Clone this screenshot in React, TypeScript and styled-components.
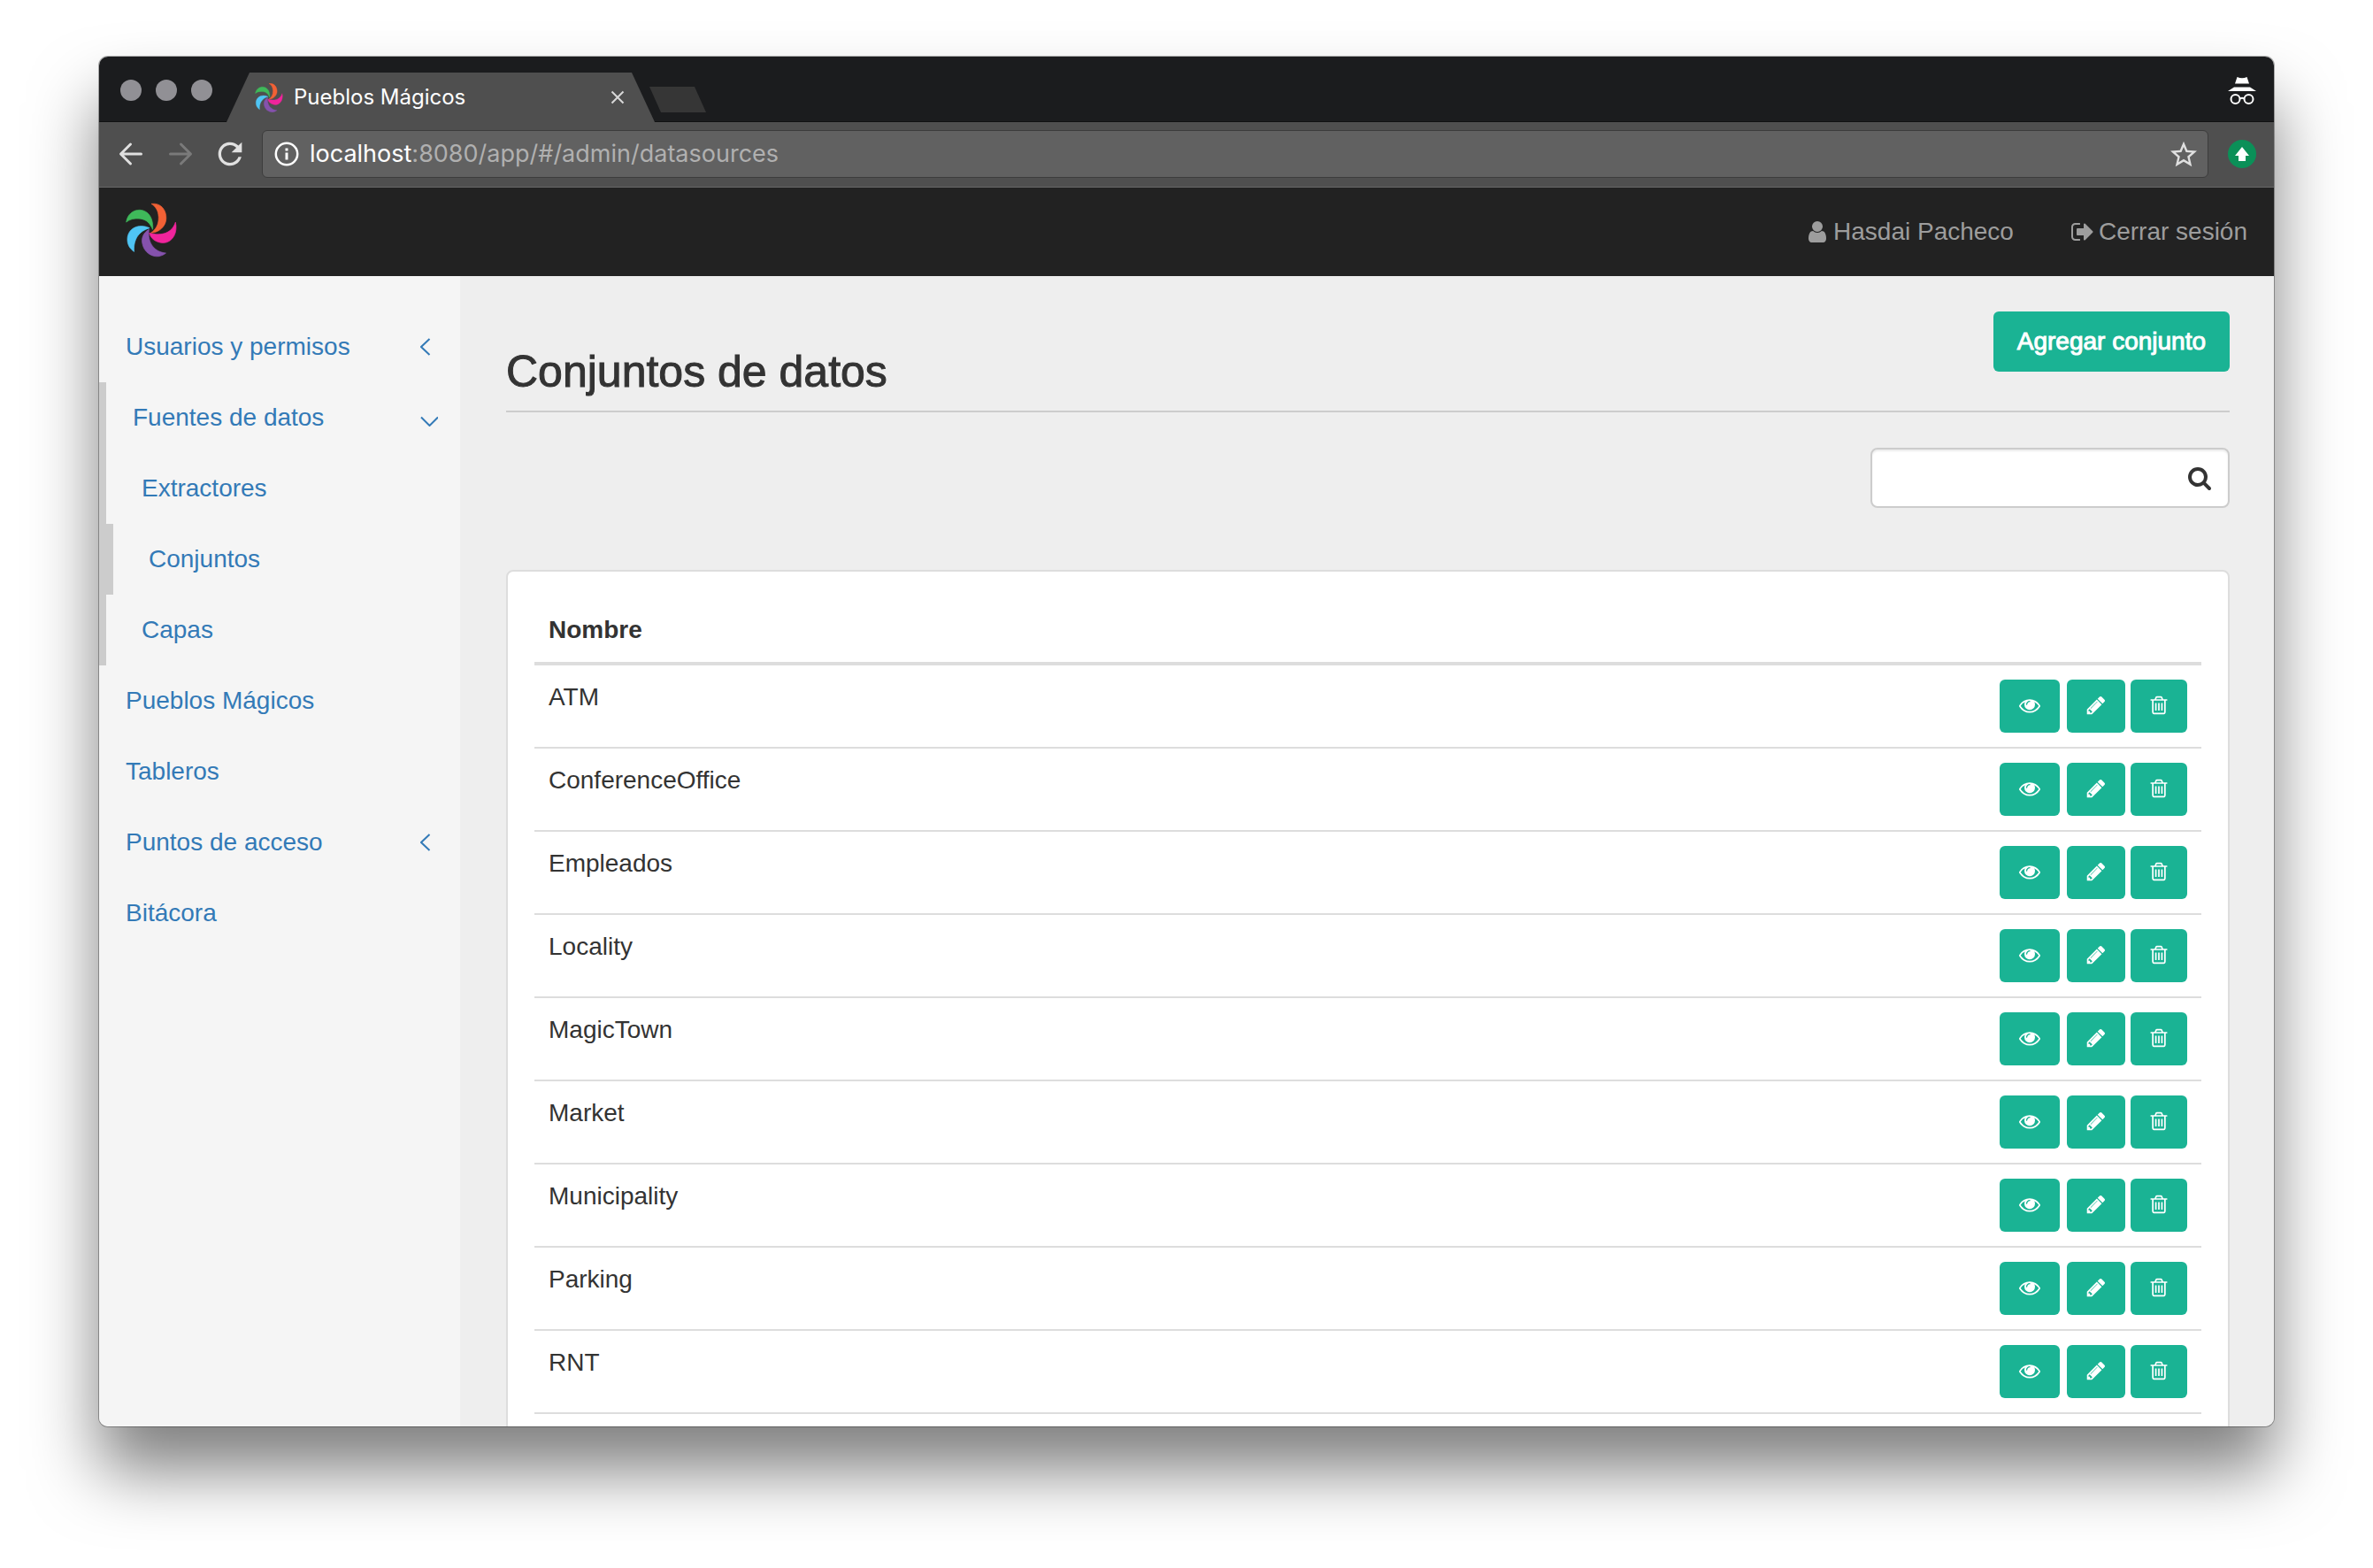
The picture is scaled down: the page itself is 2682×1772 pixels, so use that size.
import React from "react";
import styled, { createGlobalStyle } from "styled-components";

const GlobalStyle = createGlobalStyle`
  *, *::before, *::after { box-sizing: border-box; }
  body { margin: 0; background: #fff; }
  button, input { font: inherit; }
`;

const appFont = `"Liberation Sans", Arial, sans-serif`;
const chromeFont = `Inter, Roboto, sans-serif`;

/* ---------- browser window ---------- */

const Desktop = styled.div`
  display: flex;
  height: 100vh;
  padding: 64px 112px 160px;
  background: #fff;
`;

const BrowserWindow = styled.div`
  flex: 1;
  min-width: 0;
  display: flex;
  flex-direction: column;
  overflow: hidden;
  border-radius: 10px;
  background: #eee;
  box-shadow: 0 0 0 1px rgba(0, 0, 0, 0.3), 0 50px 76px rgba(0, 0, 0, 0.5);
`;

const TabStrip = styled.div`
  display: flex;
  align-items: flex-end;
  flex: none;
  height: 74px;
  padding: 2px 20px 0 24px;
  background: #1b1c1e;
  box-shadow: inset 0 -1px 0 #101112;
  font-family: ${chromeFont};
`;

const WindowButtons = styled.div`
  display: flex;
  gap: 16px;
  align-self: center;
  margin-right: 16px;
`;

const WindowButton = styled.button`
  width: 24px;
  height: 24px;
  padding: 0;
  border: 0;
  border-radius: 50%;
  background: #919095;
`;

const Tab = styled.div`
  display: flex;
  align-items: center;
  gap: 12px;
  width: 484px;
  height: 56px;
  padding: 0 34px 0 32px;
  background: #4f4f4f;
  clip-path: polygon(0 100%, 26px 0, calc(100% - 26px) 0, 100% 100%);
  color: #fff;
`;

const TabTitle = styled.span`
  flex: 1;
  font-size: 24px;
  line-height: 32px;
  white-space: nowrap;
`;

const PlainButton = styled.button`
  display: flex;
  flex: none;
  padding: 0;
  border: 0;
  background: none;
  color: inherit;
`;

const NewTab = styled.button`
  width: 64px;
  height: 29px;
  margin: 0 auto 11px -6px;
  padding: 0;
  border: 0;
  background: #363636;
  clip-path: polygon(0 0, 51px 0, 100% 100%, 13px 100%);
`;

const Incognito = styled.div`
  display: flex;
  align-self: center;
`;

const Toolbar = styled.div`
  display: flex;
  align-items: center;
  flex: none;
  gap: 22px;
  padding: 9px 20px 10px 22px;
  border-bottom: 1px solid #686868;
  background: #4f4f4f;
  font-family: ${chromeFont};
`;

const NavButtons = styled.div`
  display: flex;
  gap: 28px;
`;

const NavButton = styled(PlainButton)<{ $muted?: boolean }>`
  color: ${(p) => (p.$muted ? "#7a7a7a" : "#e0e0e0")};
`;

const AddressBar = styled.div`
  display: flex;
  align-items: center;
  flex: 1;
  min-width: 0;
  height: 54px;
  gap: 12px;
  padding: 0 12px 0 13px;
  border: 1px solid #3c3c3c;
  border-radius: 6px;
  background: #616161;
  color: #e0e0e0;
`;

const Url = styled.div`
  flex: 1;
  color: #b0b0b0;
  font-size: 27px;
  line-height: 36px;
  white-space: nowrap;
`;

const UrlHost = styled.span`
  color: #fff;
`;

/* ---------- application ---------- */

const AppHeader = styled.header`
  display: flex;
  align-items: center;
  justify-content: space-between;
  flex: none;
  height: 100px;
  padding: 0 30px;
  background: #222;
  font-family: ${appFont};
`;

const HomeLink = styled.a`
  display: flex;
  margin-bottom: 4px;
`;

const UserNav = styled.nav`
  display: flex;
  gap: 64px;
`;

const UserLink = styled.a`
  display: flex;
  align-items: center;
  gap: 4px;
  color: #9d9d9d;
  font-size: 28px;
  line-height: 40px;
  text-decoration: none;
`;

const AppBody = styled.div`
  display: flex;
  flex: 1;
  min-height: 0;
  font-family: ${appFont};
  font-size: 28px;
  line-height: 40px;
`;

const Sidebar = styled.nav`
  flex: none;
  width: 408px;
  padding-top: 40px;
  background: #f5f5f5;
`;

const MenuList = styled.ul`
  margin: 0;
  padding: 0;
  list-style: none;
`;

const MenuItem = styled.li<{ $active?: boolean }>`
  border-left: ${(p) => (p.$active ? "8px solid #ccc" : "0")};
`;

const MenuLink = styled.a<{ $nested?: boolean }>`
  display: flex;
  align-items: center;
  justify-content: space-between;
  padding: 20px 25px 20px ${(p) => (p.$nested ? "40px" : "30px")};
  color: #337ab7;
  text-decoration: none;
`;

const Content = styled.main`
  flex: 1;
  min-width: 0;
  padding: 40px 50px 40px 52px;
  background: #eee;
  color: #333;
`;

const PageHeader = styled.div`
  display: flex;
  align-items: flex-start;
  justify-content: space-between;
  padding-bottom: 16px;
  border-bottom: 2px solid #ccc;
`;

const PageTitle = styled.h1`
  margin: 40px 0 0;
  font-size: 50px;
  font-weight: 400;
  line-height: 56px;
  -webkit-text-stroke: 1px #333;
`;

const PrimaryButton = styled.button`
  height: 68px;
  padding: 0 27px;
  border: 0;
  border-radius: 6px;
  background: #1ab394;
  color: #fff;
  -webkit-text-stroke: 1px #fff;
`;

const SearchBox = styled.label`
  display: flex;
  align-items: center;
  width: 406px;
  height: 68px;
  margin: 40px 0 70px auto;
  padding: 0 18px 0 24px;
  border: 2px solid #ccc;
  border-radius: 8px;
  background: #fff;
  box-shadow: inset 0 2px 2px rgba(0, 0, 0, 0.075);
`;

const SearchInput = styled.input`
  flex: 1;
  min-width: 0;
  padding: 0;
  border: 0;
  outline: 0;
  background: none;
  color: #333;
`;

const Panel = styled.section`
  padding: 30px;
  border: 2px solid #ddd;
  border-radius: 8px;
  background: #fff;
`;

const DataTable = styled.table`
  width: 100%;
  border-collapse: separate;
  border-spacing: 0;
`;

const HeadCell = styled.th`
  padding: 16px;
  border-bottom: 4px solid #ddd;
  text-align: left;
`;

const Cell = styled.td`
  padding: 16px;
  border-bottom: 2px solid #ddd;
  vertical-align: top;
`;

const Actions = styled.div`
  display: flex;
  justify-content: flex-end;
  gap: 6px;
`;

const ActionButton = styled.button<{ $width: number }>`
  display: flex;
  align-items: center;
  justify-content: center;
  width: ${(p) => p.$width}px;
  height: 60px;
  padding: 0 0 2px;
  border: 0;
  border-radius: 6px;
  background: #1ab394;
  color: #fff;

  &:first-child {
    margin-right: 2px;
  }
`;

/* ---------- icons ---------- */

const glyphs = {
  eye: "M1664 960q-152-236-381-353 61 104 61 225 0 185-131.5 316.5t-316.5 131.5-316.5-131.5-131.5-316.5q0-121 61-225-229 117-381 353 133 205 333.5 326.5t434.5 121.5 434.5-121.5 333.5-326.5zm-720-384q0-20-14-34t-34-14q-125 0-214.5 89.5t-89.5 214.5q0 20 14 34t34 14 34-14 14-34q0-86 61-147t147-61q20 0 34-14t14-34zm848 384q0 34-20 69-140 230-376.5 368.5t-499.5 138.5-499.5-139-376.5-368q-20-35-20-69t20-69q140-229 376.5-368t499.5-139 499.5 139 376.5 368q20 35 20 69z",
  pencil:
    "M491 1536l91-91-235-235-91 91v107h128v128h107zm523-928q0-22-22-22-10 0-17 7l-542 542q-7 7-7 17 0 22 22 22 10 0 17-7l542-542q7-7 7-17zm-54-192l416 416-832 832h-416v-416zm683 96q0 53-37 90l-166 166-416-416 166-165q36-38 90-38 53 0 91 38l235 234q37 39 37 91z",
  trash:
    "M704 736v576q0 14-9 23t-23 9h-64q-14 0-23-9t-9-23v-576q0-14 9-23t23-9h64q14 0 23 9t9 23zm256 0v576q0 14-9 23t-23 9h-64q-14 0-23-9t-9-23v-576q0-14 9-23t23-9h64q14 0 23 9t9 23zm256 0v576q0 14-9 23t-23 9h-64q-14 0-23-9t-9-23v-576q0-14 9-23t23-9h64q14 0 23 9t9 23zm128 724v-948h-896v948q0 22 7 40.5t14.5 27 10.5 8.5h832q3 0 10.5-8.5t14.5-27 7-40.5zm-672-1076h448l-48-117q-7-9-17-11h-317q-10 2-17 11zm928 32v64q0 14-9 23t-23 9h-96v948q0 83-47 143.5t-113 60.5h-832q-66 0-113-58.5t-47-141.5v-952h-96q-14 0-23-9t-9-23v-64q0-14 9-23t23-9h309l70-167q15-37 54-63t79-26h320q40 0 79 26t54 63l70 167h309q14 0 23 9t9 23z",
  search:
    "M1216 832q0-185-131.5-316.5t-316.5-131.5-316.5 131.5-131.5 316.5 131.5 316.5 316.5 131.5 316.5-131.5 131.5-316.5zm512 832q0 52-38 90t-90 38q-54 0-90-38l-343-342q-179 124-399 124-143 0-273.5-55.5t-225-150-150-225-55.5-273.5 55.5-273.5 150-225 225-150 273.5-55.5 273.5 55.5 225 150 150 225 55.5 273.5q0 220-124 399l343 343q37 37 37 90z",
  user: "M1536 1399q0 109-62.5 187t-150.5 78h-854q-88 0-150.5-78t-62.5-187q0-85 8.5-160.5t31.5-152 58.5-131 94-89 134.5-34.5q131 128 313 128t313-128q76 0 134.5 34.5t94 89 58.5 131 31.5 152 8.5 160.5zm-256-887q0 159-112.5 271.5t-271.5 112.5-271.5-112.5-112.5-271.5 112.5-271.5 271.5-112.5 271.5 112.5 112.5 271.5z",
  signOut:
    "M704 1440q0 4 1 20t.5 26.5-3 23.5-10 19.5-20.5 6.5h-320q-119 0-203.5-84.5t-84.5-203.5v-704q0-119 84.5-203.5t203.5-84.5h320q13 0 22.5 9.5t9.5 22.5q0 4 1 20t.5 26.5-3 23.5-10 19.5-20.5 6.5h-320q-66 0-113 47t-47 113v704q0 66 47 113t113 47h312l11.5 1 11.5 3 8 5.5 7 9 2 13.5zm928-544q0 26-19 45l-544 544q-19 19-45 19t-45-19-19-45v-288h-448q-26 0-45-19t-19-45v-384q0-26 19-45t45-19h448v-288q0-26 19-45t45-19 45 19l544 544q19 19 19 45z",
};

function Glyph({ name, size }: { name: keyof typeof glyphs; size: number }) {
  return (
    <svg width={size} height={size} viewBox="0 0 1792 1792" fill="currentColor" aria-hidden="true">
      <path d={glyphs[name]} />
    </svg>
  );
}

const blades = [
  { color: "#f26135", d: "M124 30C160 25 176 55 175 80C175 108 148 130 122 130C140 118 150 100 149 75C148 55 140 40 124 30Z" },
  { color: "#3fb95a", d: "M38 93C42 65 62 51 85 51C115 53 132 80 129 118C118 95 108 84 85 81C65 79 50 83 38 93Z" },
  { color: "#4fc5f5", d: "M118 113C80 95 42 115 42 152C42 170 50 184 65 194C62 160 75 125 118 113Z" },
  { color: "#8552ad", d: "M116 118C95 130 90 150 93 165C98 195 125 214 150 210C160 208 168 204 174 199C135 195 110 165 116 118Z" },
  { color: "#f0249c", d: "M117 130C160 142 195 130 207 93C215 125 200 163 165 164C140 163 122 150 117 130Z" },
];

function Pinwheel({ width, height }: { width: number; height: number }) {
  return (
    <svg width={width} height={height} viewBox="36 28 176 184" strokeWidth="2" aria-hidden="true">
      {blades.map((blade) => (
        <path key={blade.color} fill={blade.color} stroke={blade.color} d={blade.d} />
      ))}
    </svg>
  );
}

function ArrowIcon({ forward }: { forward?: boolean }) {
  return (
    <svg width="28" height="28" viewBox="0 0 28 28" fill="none" stroke="currentColor" strokeWidth="3" strokeLinecap="round" strokeLinejoin="round" aria-hidden="true">
      {forward ? <path d="M2.500 14H25M14.500 3L25.500 14L14.500 25" /> : <path d="M25.500 14H3M13.500 3L2.500 14L13.500 25" />}
    </svg>
  );
}

function Chevron({ open }: { open?: boolean }) {
  return (
    <svg width="20" height="20" viewBox="0 0 20 20" fill="none" stroke="currentColor" strokeWidth="2" aria-hidden="true">
      {open ? <path d="M1 9.500L10.500 19L20 9.500" /> : <path d="M10.500 1L1 10L10.500 19" />}
    </svg>
  );
}

/* ---------- data ---------- */

type Entry = { label: string; active?: boolean; expandable?: boolean; children?: Entry[] };

const menu: Entry[] = [
  { label: "Usuarios y permisos", expandable: true },
  {
    label: "Fuentes de datos",
    expandable: true,
    active: true,
    children: [{ label: "Extractores" }, { label: "Conjuntos", active: true }, { label: "Capas" }],
  },
  { label: "Pueblos Mágicos" },
  { label: "Tableros" },
  { label: "Puntos de acceso", expandable: true },
  { label: "Bitácora" },
];

const datasets = ["ATM", "ConferenceOffice", "Empleados", "Locality", "MagicTown", "Market", "Municipality", "Parking", "RNT"];

function Menu({ entries, nested }: { entries: Entry[]; nested?: boolean }) {
  return (
    <MenuList>
      {entries.map((entry) => (
        <MenuItem key={entry.label} $active={entry.active}>
          <MenuLink href="#" $nested={nested}>
            {entry.label}
            {entry.expandable && <Chevron open={!!entry.children} />}
          </MenuLink>
          {entry.children && <Menu entries={entry.children} nested />}
        </MenuItem>
      ))}
    </MenuList>
  );
}

function BrowserChrome() {
  return (
    <>
      <TabStrip>
        <WindowButtons>
          <WindowButton aria-label="Cerrar ventana" />
          <WindowButton aria-label="Minimizar" />
          <WindowButton aria-label="Maximizar" />
        </WindowButtons>
        <Tab>
          <Pinwheel width={32} height={33} />
          <TabTitle>Pueblos Mágicos</TabTitle>
          <PlainButton aria-label="Cerrar pestaña">
            <svg width="16" height="16" viewBox="0 0 16 16" stroke="#d8d8d8" strokeWidth="2" aria-hidden="true">
              <path d="M1.500 1.500L14.500 14.500M14.500 1.500L1.500 14.500" />
            </svg>
          </PlainButton>
        </Tab>
        <NewTab aria-label="Nueva pestaña" />
        <Incognito>
          <svg width="32" height="32" viewBox="0 0 32 32" fill="#fff" aria-hidden="true">
            <path d="M10.500 1Q16 3.500 21.500 1L24 8.500H8Z" />
            <path d="M7 12.500H25L32 17H0Z" />
            <g fill="none" stroke="#fff" strokeWidth="2">
              <circle cx="8.500" cy="26" r="5" />
              <circle cx="23.500" cy="26" r="5" />
              <path d="M13.500 25.500Q16 24 18.500 25.500" />
            </g>
          </svg>
        </Incognito>
      </TabStrip>
      <Toolbar>
        <NavButtons>
          <NavButton aria-label="Atrás"><ArrowIcon /></NavButton>
          <NavButton aria-label="Adelante" $muted><ArrowIcon forward /></NavButton>
          <NavButton aria-label="Recargar">
            <svg width="28" height="28" viewBox="3.600 3.600 16.800 16.800" fill="currentColor" aria-hidden="true">
              <path d="M17.65 6.35C16.2 4.9 14.21 4 12 4c-4.42 0-7.99 3.58-7.99 8s3.57 8 7.99 8c3.73 0 6.84-2.55 7.73-6h-2.08c-.82 2.33-3.04 4-5.65 4-3.31 0-6-2.69-6-6s2.69-6 6-6c1.66 0 3.14.69 4.22 1.78L13 11h7V4l-2.35 2.35z" />
            </svg>
          </NavButton>
        </NavButtons>
        <AddressBar>
          <svg width="28" height="28" viewBox="0 0 28 28" fill="none" stroke="#fff" strokeWidth="2.500" aria-hidden="true">
            <circle cx="14" cy="14" r="12.200" />
            <path strokeWidth="3" d="M14 12.500V20.500M14 7.500V10.500" />
          </svg>
          <Url>
            <UrlHost>localhost</UrlHost>:8080/app/#/admin/datasources
          </Url>
          <PlainButton aria-label="Añadir a marcadores">
            <svg width="30" height="30" viewBox="2 1.500 20 20" fill="currentColor" aria-hidden="true">
              <path d="M22 9.240l-7.190-.62L12 2 9.190 8.630 2 9.240l5.460 4.730L5.820 21 12 17.270 18.180 21l-1.630-7.030L22 9.240zM12 15.400l-3.760 2.270 1-4.280-3.320-2.880 4.380-.38L12 6.100l1.710 4.040 4.380.38-3.320 2.880 1 4.280L12 15.400z" />
            </svg>
          </PlainButton>
        </AddressBar>
        <PlainButton aria-label="Actualización disponible">
          <svg width="32" height="32" viewBox="0 0 32 32" aria-hidden="true">
            <circle cx="16" cy="16" r="16" fill="#0b9058" />
            <path fill="#fff" d="M16 8L24 18H20V24H12V18H8Z" />
          </svg>
        </PlainButton>
      </Toolbar>
    </>
  );
}

export default function App() {
  return (
    <>
      <GlobalStyle />
      <Desktop>
        <BrowserWindow>
          <BrowserChrome />
          <AppHeader>
            <HomeLink href="#" aria-label="Inicio"><Pinwheel width={58} height={62} /></HomeLink>
            <UserNav>
              <UserLink href="#"><Glyph name="user" size={28} />Hasdai Pacheco</UserLink>
              <UserLink href="#"><Glyph name="signOut" size={28} />Cerrar sesión</UserLink>
            </UserNav>
          </AppHeader>
          <AppBody>
            <Sidebar><Menu entries={menu} /></Sidebar>
            <Content>
              <PageHeader>
                <PageTitle>Conjuntos de datos</PageTitle>
                <PrimaryButton>Agregar conjunto</PrimaryButton>
              </PageHeader>
              <SearchBox>
                <SearchInput type="text" aria-label="Buscar conjunto" />
                <Glyph name="search" size={28} />
              </SearchBox>
              <Panel>
                <DataTable>
                  <thead>
                    <tr>
                      <HeadCell>Nombre</HeadCell>
                      <HeadCell aria-label="Acciones" />
                    </tr>
                  </thead>
                  <tbody>
                    {datasets.map((name) => (
                      <tr key={name}>
                        <Cell>{name}</Cell>
                        <Cell>
                          <Actions>
                            <ActionButton $width={68} aria-label={`Ver ${name}`}><Glyph name="eye" size={24} /></ActionButton>
                            <ActionButton $width={66} aria-label={`Editar ${name}`}><Glyph name="pencil" size={24} /></ActionButton>
                            <ActionButton $width={64} aria-label={`Eliminar ${name}`}><Glyph name="trash" size={24} /></ActionButton>
                          </Actions>
                        </Cell>
                      </tr>
                    ))}
                  </tbody>
                </DataTable>
              </Panel>
            </Content>
          </AppBody>
        </BrowserWindow>
      </Desktop>
    </>
  );
}
